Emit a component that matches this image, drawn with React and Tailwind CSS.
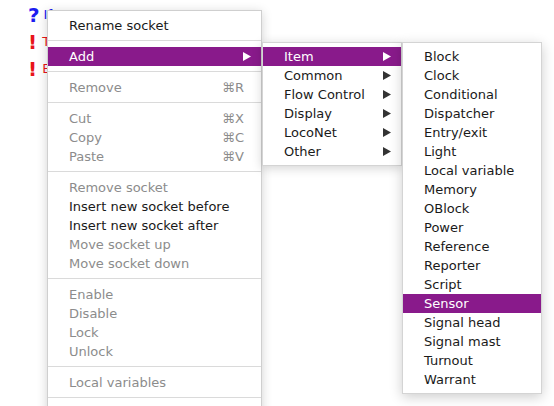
import React from 'react'

const FONT = { fontFamily: '"DejaVu Sans", "Liberation Sans", sans-serif' }

const MAIN = [
  { label: 'Rename socket' },
  'sep',
  { label: 'Add', active: true, arrow: true },
  'sep',
  { label: 'Remove', off: true, key: '⌘R' },
  'sep',
  { label: 'Cut', off: true, key: '⌘X' },
  { label: 'Copy', off: true, key: '⌘C' },
  { label: 'Paste', off: true, key: '⌘V' },
  'sep',
  { label: 'Remove socket', off: true },
  { label: 'Insert new socket before' },
  { label: 'Insert new socket after' },
  { label: 'Move socket up', off: true },
  { label: 'Move socket down', off: true },
  'sep',
  { label: 'Enable', off: true },
  { label: 'Disable', off: true },
  { label: 'Lock', off: true },
  { label: 'Unlock', off: true },
  'sep',
  { label: 'Local variables', off: true },
  'sep',
  { label: '' },
]

const GROUPS = ['Item', 'Common', 'Flow Control', 'Display', 'LocoNet', 'Other']

const ITEMS = [
  'Block', 'Clock', 'Conditional', 'Dispatcher', 'Entry/exit', 'Light', 'Local variable',
  'Memory', 'OBlock', 'Power', 'Reference', 'Reporter', 'Script', 'Sensor',
  'Signal head', 'Signal mast', 'Turnout', 'Warrant',
]

function Arrow({ white }) {
  return (
    <svg width="8" height="9" viewBox="0 0 8 9" className="shrink-0">
      <path d="M0 0 L8 4.5 L0 9 Z" fill={white ? '#ffffff' : '#333333'} />
    </svg>
  )
}

function Row({ label, active, off, shortcut, arrow }) {
  return (
    <div
      className={`h-[19px] flex items-center pl-[21px] ${arrow ? 'pr-[10px]' : 'pr-[17px]'} text-[13px] leading-none ${
        active ? 'bg-[#891a8b] text-white' : off ? 'text-[#8c8c8c]' : 'text-[#1a1a1a]'
      }`}
    >
      <span className="flex-1 whitespace-nowrap">{label}</span>
      {shortcut && <span className="whitespace-nowrap">{shortcut}</span>}
      {arrow && <Arrow white={active} />}
    </div>
  )
}

function Sep() {
  return <div className="mt-[5px] mb-[6px] h-px bg-[#dadada]" />
}

export default function App() {
  return (
    <div className="relative w-[554px] h-[406px] overflow-hidden bg-white" style={FONT}>
      {/* editor lines behind the popup */}
      <div className="flex flex-col pl-[28px] pt-[1px]">
        <div className="h-[27px] flex items-center gap-[4px] text-[#1c1cf0]">
          <span className="text-[20px] font-bold leading-none">?</span>
          <span className="text-[13px] leading-none">If</span>
        </div>
        <div className="h-[27px] flex items-center gap-[5px] text-[#e8141a]">
          <span className="text-[20px] font-bold leading-none">!</span>
          <span className="text-[13px] leading-none">Then</span>
        </div>
        <div className="h-[27px] flex items-center gap-[5px] text-[#e8141a]">
          <span className="text-[20px] font-bold leading-none">!</span>
          <span className="text-[13px] leading-none">Else</span>
        </div>
      </div>

      {/* main popup */}
      <div className="absolute left-[47px] top-[10px] w-[215px] pt-[5px] bg-white border border-[#cfcfcf] shadow-[0_2px_10px_rgba(0,0,0,0.18)]">
        {MAIN.map((m, i) =>
          m === 'sep' ? (
            <Sep key={i} />
          ) : (
            <Row key={i} label={m.label} active={m.active} off={m.off} shortcut={m.key} arrow={m.arrow} />
          )
        )}
      </div>

      {/* Add submenu */}
      <div className="absolute left-[262px] top-[42px] w-[140px] py-[4px] bg-white border border-[#d4d4d4] shadow-[0_2px_10px_rgba(0,0,0,0.18)]">
        {GROUPS.map((g, i) => (
          <Row key={g} label={g} active={i === 0} arrow />
        ))}
      </div>

      {/* Item submenu */}
      <div className="absolute left-[402px] top-[42px] w-[140px] py-[4px] bg-white border border-[#d4d4d4] shadow-[0_3px_12px_rgba(0,0,0,0.2)]">
        {ITEMS.map((it) => (
          <Row key={it} label={it} active={it === 'Sensor'} />
        ))}
      </div>
    </div>
  )
}
